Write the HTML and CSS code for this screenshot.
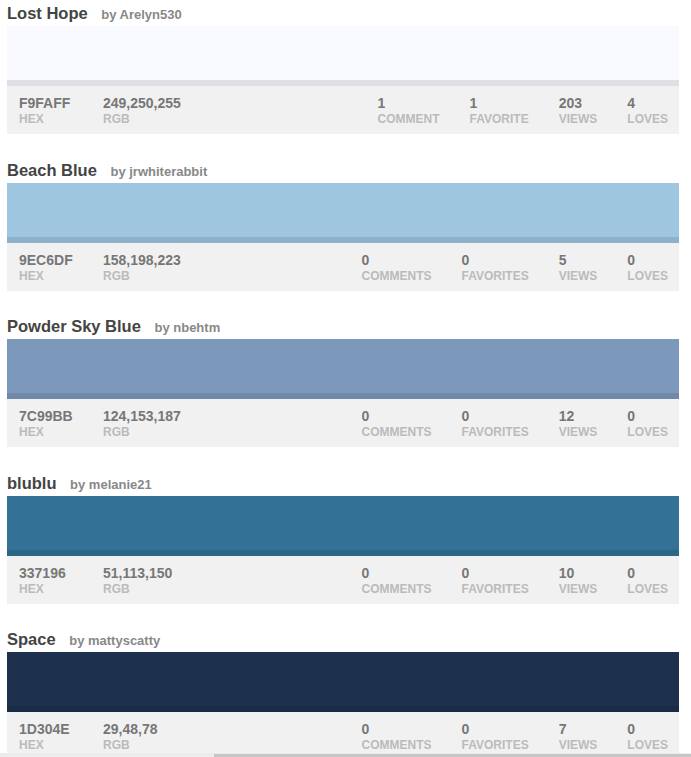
FILE: index.html
```html
<!DOCTYPE html>
<html>
<head>
<meta charset="utf-8">
<link rel="stylesheet" href="styles.css">
</head>
<body>
<div class="list">
  <div class="card">
    <div class="title">Lost Hope <span class="by">by Arelyn530</span></div>
    <div class="swatch" style="background:#F9FAFF"></div>
    <div class="info">
      <div class="col hex"><b>F9FAFF</b><span>HEX</span></div>
      <div class="col"><b>249,250,255</b><span>RGB</span></div>
      <div class="stats">
        <div class="col"><b>1</b><span>COMMENT</span></div>
        <div class="col"><b>1</b><span>FAVORITE</span></div>
        <div class="col"><b>203</b><span>VIEWS</span></div>
        <div class="col"><b>4</b><span>LOVES</span></div>
      </div>
    </div>
  </div>
  <div class="card">
    <div class="title">Beach Blue <span class="by">by jrwhiterabbit</span></div>
    <div class="swatch" style="background:#9EC6DF"></div>
    <div class="info">
      <div class="col hex"><b>9EC6DF</b><span>HEX</span></div>
      <div class="col"><b>158,198,223</b><span>RGB</span></div>
      <div class="stats">
        <div class="col"><b>0</b><span>COMMENTS</span></div>
        <div class="col"><b>0</b><span>FAVORITES</span></div>
        <div class="col"><b>5</b><span>VIEWS</span></div>
        <div class="col"><b>0</b><span>LOVES</span></div>
      </div>
    </div>
  </div>
  <div class="card">
    <div class="title">Powder Sky Blue <span class="by">by nbehtm</span></div>
    <div class="swatch" style="background:#7C99BB"></div>
    <div class="info">
      <div class="col hex"><b>7C99BB</b><span>HEX</span></div>
      <div class="col"><b>124,153,187</b><span>RGB</span></div>
      <div class="stats">
        <div class="col"><b>0</b><span>COMMENTS</span></div>
        <div class="col"><b>0</b><span>FAVORITES</span></div>
        <div class="col"><b>12</b><span>VIEWS</span></div>
        <div class="col"><b>0</b><span>LOVES</span></div>
      </div>
    </div>
  </div>
  <div class="card">
    <div class="title">blublu <span class="by">by melanie21</span></div>
    <div class="swatch" style="background:#337196"></div>
    <div class="info">
      <div class="col hex"><b>337196</b><span>HEX</span></div>
      <div class="col"><b>51,113,150</b><span>RGB</span></div>
      <div class="stats">
        <div class="col"><b>0</b><span>COMMENTS</span></div>
        <div class="col"><b>0</b><span>FAVORITES</span></div>
        <div class="col"><b>10</b><span>VIEWS</span></div>
        <div class="col"><b>0</b><span>LOVES</span></div>
      </div>
    </div>
  </div>
  <div class="card">
    <div class="title">Space <span class="by">by mattyscatty</span></div>
    <div class="swatch" style="background:#1D304E"></div>
    <div class="info">
      <div class="col hex"><b>1D304E</b><span>HEX</span></div>
      <div class="col"><b>29,48,78</b><span>RGB</span></div>
      <div class="stats">
        <div class="col"><b>0</b><span>COMMENTS</span></div>
        <div class="col"><b>0</b><span>FAVORITES</span></div>
        <div class="col"><b>7</b><span>VIEWS</span></div>
        <div class="col"><b>0</b><span>LOVES</span></div>
      </div>
    </div>
  </div>
</div>
<div class="hscroll"><div class="thumb"></div></div>
</body>
</html>
```
FILE: styles.css
```css
html, body {
  margin: 0;
  padding: 0;
  background: #fff;
  overflow: hidden;
}
body {
  font-family: "Liberation Sans", Arial, sans-serif;
}
.list {
  width: 672px;
  margin-left: 7px;
}
.card {
  margin-bottom: 22.5px;
}
.title {
  height: 25px;
  padding-top: 1px;
  line-height: 25px;
  font-size: 16.5px;
  font-weight: bold;
  color: #444;
  white-space: nowrap;
}
.by {
  font-size: 13px;
  color: #888;
  margin-left: 9px;
}
.swatch {
  height: 60px;
  box-shadow: inset 0 -6px 0 rgba(0, 0, 0, 0.1);
}
.info {
  display: flex;
  background: #f1f1f1;
  padding: 9px 11px 7px 12px;
  height: 32px;
}
.col {
  display: flex;
  flex-direction: column;
  white-space: nowrap;
}
.col b {
  font-size: 14px;
  line-height: 16px;
  color: #777;
}
.col span {
  font-size: 12px;
  line-height: 16px;
  font-weight: bold;
  color: #bbb;
}
.hex {
  width: 84px;
}
.stats {
  margin-left: auto;
  display: flex;
  gap: 30px;
}
.hscroll {
  position: fixed;
  left: 0;
  right: 0;
  bottom: 0;
  height: 4px;
  background: #ececec;
}
.thumb {
  position: absolute;
  left: 214px;
  right: 0;
  bottom: 0;
  height: 3px;
  background: #c6c6c6;
}
```
